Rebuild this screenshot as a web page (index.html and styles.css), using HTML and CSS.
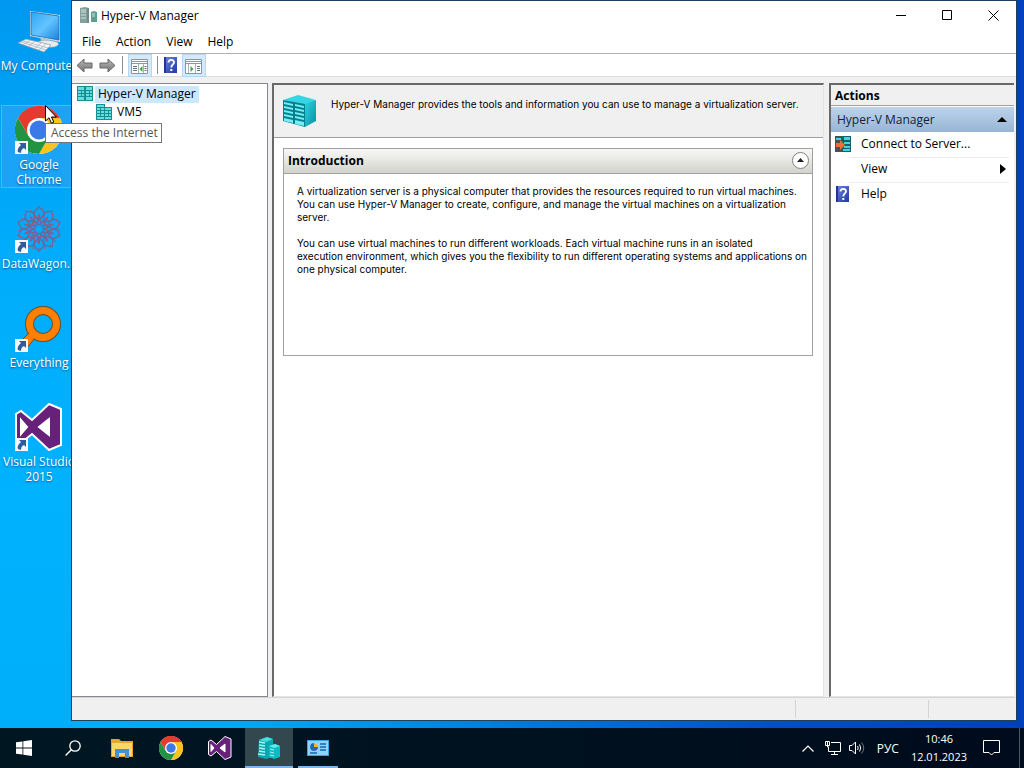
FILE: index.html
```html
<!DOCTYPE html>
<html lang="en">
<head>
    <meta charset="UTF-8">
    <meta name="viewport" content="width=device-width, initial-scale=1.0">
    <title>Hyper-V Manager</title>
    <link rel="stylesheet" href="styles.css">
</head>
<body>
    <!-- Shared icons -->
    <svg class="sprite" aria-hidden="true">
        <defs>
            <linearGradient id="cyan" x1="0" y1="0" x2="1" y2="1">
                <stop offset="0" stop-color="#2fd3e2"/>
                <stop offset="1" stop-color="#068fa3"/>
            </linearGradient>
            <linearGradient id="screen" x1="0" y1="0" x2="1" y2="1">
                <stop offset="0" stop-color="#2fa5f5"/>
                <stop offset="0.5" stop-color="#63c4ff"/>
                <stop offset="1" stop-color="#1683dc"/>
            </linearGradient>
            <linearGradient id="arrow" x1="0" y1="0" x2="0" y2="1">
                <stop offset="0" stop-color="#b4b4b4"/>
                <stop offset="1" stop-color="#777"/>
            </linearGradient>
            <linearGradient id="helpblue" x1="0" y1="0" x2="1" y2="1">
                <stop offset="0" stop-color="#7084dc"/>
                <stop offset="1" stop-color="#2038a8"/>
            </linearGradient>
        </defs>
        <symbol id="chrome" viewBox="0 0 48 48">
            <circle cx="24" cy="24" r="24" fill="#fff"/>
            <path d="M24 24 L3.2 12 A24 24 0 0 1 44.8 12 Z" fill="#e33b2e"/>
            <path d="M24 12 H44.8 A24 24 0 0 1 24 48 L34.4 30 Z" fill="#fcc31e"/>
            <path d="M13.6 30 L3.2 12 A24 24 0 0 0 24 48 L34.4 30 Z" fill="#229342"/>
            <path d="M24 12 H44.8 A24 24 0 0 0 3.2 12 L13.6 30 Z" fill="#e33b2e"/>
            <circle cx="24" cy="24" r="12" fill="#fff"/>
            <circle cx="24" cy="24" r="9.4" fill="#3b79e8"/>
        </symbol>
        <symbol id="vs" viewBox="0 0 48 48">
            <path fill-rule="evenodd" d="M34 1 L46 6 V42 L34 47 L17 31 L6 40 L1 37 V11 L6 8 L17 17 Z M34 16 L24 24 L34 32 Z M6 17 V31 L12 24 Z" fill="#68217a" stroke="#fff" stroke-width="2"/>
            <path d="M34 16 L24 24 L34 32 Z M6 17 V31 L12 24 Z" fill="#fff"/>
        </symbol>
        <symbol id="shortcut" viewBox="0 0 13 13">
            <path d="M0 0 H13 V13 H0 Z" fill="#f4f7fb"/>
            <path d="M4 2 H11 V9 L9 7 C7 8 6 9 6 12 L3 11 C2 8 4 6 6 4 Z" fill="#2f5c9f"/>
        </symbol>
        <symbol id="servers" viewBox="0 0 16 16">
            <path d="M0 0 H9 V3 H16 V16 H0 Z" fill="#178f92"/>
            <path d="M1 1 H8 V3 H1 Z M1 4 H4 V6 H1 Z M5 4 H8 V6 H5 Z M1 7 H4 V9 H1 Z M5 7 H8 V9 H5 Z M1 10 H4 V12 H1 Z M5 10 H8 V12 H5 Z M1 13 H8 V15 H1 Z M9 4 H15 V6 H9 Z M9 7 H12 V9 H9 Z M13 7 H15 V9 H13 Z M9 10 H12 V12 H9 Z M13 10 H15 V12 H13 Z M9 13 H15 V15 H9 Z" fill="#66dede"/>
        </symbol>
        <symbol id="help" viewBox="0 0 13 16">
            <path d="M0 0 H13 V16 H0 Z" fill="url(#helpblue)"/>
            <path d="M0 0 H2 V16 H0 Z" fill="#23358e"/>
            <path d="M4.5 5.5 C4.5 2 10 2 10 5.5 C10 7.5 7.3 7.5 7.3 10.5" fill="none" stroke="#fff" stroke-width="1.8"/>
            <path d="M6.3 12 H8.3 V14 H6.3 Z" fill="#fff"/>
        </symbol>
    </svg>

    <main class="desktop">
        <div class="shortcuts">
            <button class="shortcut">
                <svg class="shortcut-icon" viewBox="0 0 48 48">
                    <path d="M15 4 L45 8 V35 L15 29 Z" fill="#d5e4ee"/>
                    <path d="M16 5 L44 9 V33 L16 28 Z" fill="url(#screen)" stroke="#1769ad" stroke-width="0.8"/>
                    <path d="M25 30 L35 32 V36 L27 36 Z" fill="#b9c7d1"/>
                    <path d="M21 36 Q28 31 42 35 Q46 38 39 40 Q26 41 21 36 Z" fill="#e6ebee" stroke="#9aa9b3" stroke-width="0.6"/>
                    <path d="M11 32 L36 38 L29 45 L3 36 Z" fill="#f3f5f6" stroke="#8d9ba5" stroke-width="0.7"/>
                    <path d="M8 34 L33 41 M6 35 L31 43 M15 33 L8 38 M20 34 L13 40 M26 36 L19 42 M31 37 L24 43" stroke="#aab5bc" stroke-width="0.8"/>
                </svg>
                <span class="one-line">My Computer</span>
            </button>
            <button class="shortcut shortcut-hover">
                <svg class="shortcut-icon" viewBox="0 0 48 48">
                    <use href="#chrome" width="48" height="48"/>
                    <use href="#shortcut" y="35" width="13" height="13"/>
                </svg>
                <span>Google Chrome</span>
            </button>
            <button class="shortcut">
                <svg class="shortcut-icon" viewBox="0 0 48 48">
                    <g fill="none" stroke="#66699f" stroke-width="1.3">
                        <path id="petal" d="M24 16 L18 8 L24 2 L30 8 Z M24 20 L15 12 M24 20 L33 12"/>
                        <use href="#petal" transform="rotate(36 24 24)"/>
                        <use href="#petal" transform="rotate(72 24 24)"/>
                        <use href="#petal" transform="rotate(108 24 24)"/>
                        <use href="#petal" transform="rotate(144 24 24)"/>
                        <use href="#petal" transform="rotate(180 24 24)"/>
                        <use href="#petal" transform="rotate(216 24 24)"/>
                        <use href="#petal" transform="rotate(252 24 24)"/>
                        <use href="#petal" transform="rotate(288 24 24)"/>
                        <use href="#petal" transform="rotate(324 24 24)"/>
                        <circle cx="24" cy="24" r="8" stroke="#b5527a" stroke-dasharray="3 1"/>
                        <circle cx="24" cy="24" r="13" stroke="#c04e68" stroke-dasharray="2 2"/>
                        <circle cx="24" cy="24" r="20" stroke="#b5527a" stroke-dasharray="2 4"/>
                    </g>
                    <use href="#shortcut" y="35" width="13" height="13"/>
                </svg>
                <span class="one-line">DataWagon...</span>
            </button>
            <button class="shortcut">
                <svg class="shortcut-icon" viewBox="0 0 48 48">
                    <path d="M14 29 L20 34 L11 45 L4 39 Z" fill="#ff8000" stroke="#704c24"/>
                    <circle cx="28" cy="20" r="13.5" fill="none" stroke="#704c24" stroke-width="9"/>
                    <circle cx="28" cy="20" r="13.5" fill="none" stroke="#ff8000" stroke-width="7"/>
                    <path d="M15 29 L20 33 L11 43 L6 39 Z" fill="#ff8000"/>
                    <use href="#shortcut" y="35" width="13" height="13"/>
                </svg>
                <span>Everything</span>
            </button>
            <button class="shortcut">
                <svg class="shortcut-icon" viewBox="0 0 48 48">
                    <use href="#vs" width="48" height="48"/>
                    <use href="#shortcut" y="35" width="13" height="13"/>
                </svg>
                <span>Visual Studio 2015</span>
            </button>
        </div>

        <section class="window">
            <header class="titlebar">
                <svg width="17" height="17" viewBox="0 0 17 17">
                    <path d="M0 1 L5 0 L9 1 V16 H0 Z" fill="#84a09d"/>
                    <path d="M11 5 L14 4 L17 5 V15 H11 Z" fill="#5f9d8f"/>
                    <path d="M1 3 H6 M1 5 H6 M1 8 H6 M1 11 H6 M12 7 H15 M12 9 H15" stroke="#d0e2df"/>
                    <path d="M8 1 V16" stroke="#5d7876"/>
                </svg>
                <h1>Hyper-V Manager</h1>
                <button class="caption-btn" aria-label="Minimize">
                    <svg width="11" height="11" viewBox="0 0 11 11"><path d="M0 5.5 H10" stroke="#000"/></svg>
                </button>
                <button class="caption-btn" aria-label="Maximize">
                    <svg width="11" height="11" viewBox="0 0 11 11"><path d="M0.5 0.5 H9.5 V9.5 H0.5 Z" fill="none" stroke="#000"/></svg>
                </button>
                <button class="caption-btn" aria-label="Close">
                    <svg width="11" height="11" viewBox="0 0 11 11"><path d="M0.5 0.5 L10.5 10.5 M10.5 0.5 L0.5 10.5" stroke="#000"/></svg>
                </button>
            </header>

            <nav class="menubar">
                <button>File</button>
                <button>Action</button>
                <button>View</button>
                <button>Help</button>
            </nav>

            <div class="toolbar">
                <button aria-label="Back">
                    <svg width="17" height="15" viewBox="0 0 17 15"><path d="M1 7.5 L8 1 V5 H16 V10 H8 V14 Z" fill="url(#arrow)" stroke="#666"/></svg>
                </button>
                <button aria-label="Forward">
                    <svg width="17" height="15" viewBox="0 0 17 15"><path d="M16 7.5 L9 1 V5 H1 V10 H9 V14 Z" fill="url(#arrow)" stroke="#666"/></svg>
                </button>
                <span class="divider"></span>
                <button class="pressed" aria-label="Show or hide console tree">
                    <svg width="17" height="15" viewBox="0 0 17 15">
                        <path d="M0.5 0.5 H16.5 V14.5 H0.5 Z" fill="#fff" stroke="#8c949b"/>
                        <path d="M1 2.5 H16 M1 4.5 H16" stroke="#8b98a3"/>
                        <path d="M7.5 5 V14 M12.5 5 V14" stroke="#a9b2b9"/>
                        <path d="M2 7.5 H6 M2 9.5 H6 M2 11.5 H6 M13.5 7.5 H15.5 M13.5 9.5 H15.5 M13.5 11.5 H15.5" stroke="#5c6f7c"/>
                        <path d="M11.5 7 V13 L8.5 10 Z" fill="#3ca53c"/>
                    </svg>
                </button>
                <span class="divider"></span>
                <button aria-label="Help">
                    <svg width="13" height="16"><use href="#help" width="13" height="16"/></svg>
                </button>
                <button class="pressed" aria-label="Show or hide action pane">
                    <svg width="17" height="15" viewBox="0 0 17 15">
                        <path d="M0.5 0.5 H16.5 V14.5 H0.5 Z" fill="#fff" stroke="#8c949b"/>
                        <path d="M1 2.5 H16 M1 4.5 H16" stroke="#8b98a3"/>
                        <path d="M3.5 5 V14 M10.5 5 V14" stroke="#a9b2b9"/>
                        <path d="M12 7.5 H15 M12 9.5 H15 M12 11.5 H15" stroke="#5c6f7c"/>
                        <path d="M5.5 7 V13 L8.5 10 Z" fill="#3ca53c"/>
                    </svg>
                </button>
            </div>

            <div class="panes">
                <ul class="tree">
                    <li>
                        <button class="node">
                            <svg width="16" height="16" viewBox="0 0 16 16">
                                <path d="M0 0 H16 V15 H0 Z" fill="#178f92"/>
                                <path d="M1 1 H7 V4 H1 Z M9 1 H15 V4 H9 Z M1 5 H4 V7 H1 Z M5 5 H7 V7 H5 Z M9 5 H12 V7 H9 Z M13 5 H15 V7 H13 Z M1 8 H4 V10 H1 Z M5 8 H7 V10 H5 Z M9 8 H12 V10 H9 Z M13 8 H15 V10 H13 Z M1 11 H7 V14 H1 Z M9 11 H15 V14 H9 Z" fill="#66dede"/>
                            </svg>
                            <span class="selected">Hyper-V Manager</span>
                        </button>
                        <ul>
                            <li>
                                <button class="node">
                                    <svg width="16" height="16"><use href="#servers" width="16" height="16"/></svg>
                                    <span>VM5</span>
                                </button>
                            </li>
                        </ul>
                    </li>
                </ul>

                <div class="content">
                    <div class="summary">
                        <svg width="33" height="34" viewBox="0 0 33 34">
                            <path d="M0 6 L15 1 L33 6 L22 11 Z" fill="#35d6e4"/>
                            <path d="M22 10 L33 6 V27 L22 33 Z" fill="url(#cyan)"/>
                            <path d="M0 6 L22 10 V33 L0 27 Z" fill="#087f8d"/>
                            <path d="M1 8 L10 10 V12 L1 10 Z M12 10 L21 12 V14 L12 12 Z M1 12 L10 14 V16 L1 14 Z M12 14 L21 16 V18 L12 16 Z M1 16 L10 18 V20 L1 18 Z M12 18 L21 20 V22 L12 20 Z M1 20 L10 22 V24 L1 22 Z M12 22 L21 24 V26 L12 24 Z M1 24 L10 26 V29 L1 27 Z M12 26 L21 28 V32 L12 30 Z" fill="#74edf4"/>
                        </svg>
                        <p>Hyper-V Manager provides the tools and information you can use to manage a virtualization server.</p>
                    </div>
                    <section class="card">
                        <header class="card-header">
                            <h2>Introduction</h2>
                            <button class="collapse" aria-label="Collapse">
                                <svg width="7" height="4" viewBox="0 0 7 4"><path d="M0 4 L3.5 0 L7 4 Z" fill="#222"/></svg>
                            </button>
                        </header>
                        <div class="card-body">
                            <p>A virtualization server is a physical computer that provides the resources required to run virtual machines. You can use Hyper-V Manager to create, configure, and manage the virtual machines on a virtualization server.</p>
                            <p>You can use virtual machines to run different workloads. Each virtual machine runs in an isolated<br>execution environment, which gives you the flexibility to run different operating systems and applications on one physical computer.</p>
                        </div>
                    </section>
                </div>

                <aside class="actions">
                    <h2>Actions</h2>
                    <button class="group">
                        <span>Hyper-V Manager</span>
                        <svg width="10" height="5" viewBox="0 0 10 5"><path d="M0 5 L5 0 L10 5 Z" fill="#000"/></svg>
                    </button>
                    <button class="action">
                        <svg width="16" height="16" viewBox="0 0 16 16">
                            <path d="M0 0 H16 V16 H0 Z" fill="#15616a"/>
                            <path d="M0 0 H7 V16 H0 Z" fill="#4c4f55"/>
                            <path d="M9 1 H15 V4 H9 Z M9 6 H15 V8 H9 Z M9 10 H15 V12 H9 Z M8 13 H15 V15 H8 Z M1 2 H6 V4 H1 Z" fill="#45d4da"/>
                            <path d="M1 7 H5 V4 L10 9 L5 14 V11 H1 Z" fill="#f07030"/>
                        </svg>
                        <span>Connect to Server...</span>
                    </button>
                    <button class="action">
                        <i class="no-icon"></i>
                        <span>View</span>
                        <svg class="submenu" width="6" height="10" viewBox="0 0 6 10"><path d="M0 0 L6 5 L0 10 Z" fill="#000"/></svg>
                    </button>
                    <button class="action">
                        <svg width="16" height="16"><use href="#help" x="1" width="13" height="16"/></svg>
                        <span>Help</span>
                    </button>
                </aside>
            </div>

            <footer class="statusbar">
                <span></span>
                <span></span>
                <span></span>
            </footer>
        </section>

        <div class="tooltip" role="tooltip">Access the Internet</div>
        <svg class="cursor" width="12" height="19" viewBox="0 0 12 19">
            <path d="M0.5 0.5 V16 L4 12.8 L6.4 18.2 L8.8 17.2 L6.5 12 H11.3 Z" fill="#fff" stroke="#000"/>
        </svg>
    </main>

    <footer class="taskbar">
        <button class="task" aria-label="Start">
            <svg width="16" height="16" viewBox="0 0 16 16"><path d="M0 2.3 L6.5 1.4 V7.6 H0 Z M7.3 1.3 L16 0 V7.6 H7.3 Z M0 8.4 H6.5 V14.6 L0 13.7 Z M7.3 8.4 H16 V16 L7.3 14.7 Z" fill="#fff"/></svg>
        </button>
        <button class="task" aria-label="Search">
            <svg width="16" height="16" viewBox="0 0 16 16"><circle cx="10" cy="6" r="5.2" fill="none" stroke="#fff" stroke-width="1.3"/><path d="M6.3 9.7 L0.6 15.4" stroke="#fff" stroke-width="1.4"/></svg>
        </button>
        <button class="task" aria-label="File Explorer">
            <svg width="22" height="20" viewBox="0 0 22 20">
                <path d="M0 1 H8 L10 3 H22 V19 H0 Z" fill="#e5a72b"/>
                <path d="M1 5 H21 V18 H1 Z" fill="#fcd66b"/>
                <path d="M4 11 H18 V20 H14 V15 H8 V20 H4 Z" fill="#3f93cf"/>
            </svg>
        </button>
        <button class="task" aria-label="Google Chrome">
            <svg width="24" height="24"><use href="#chrome" width="24" height="24"/></svg>
        </button>
        <button class="task" aria-label="Visual Studio">
            <svg width="24" height="24"><use href="#vs" width="24" height="24"/></svg>
        </button>
        <button class="task task-active" aria-label="Hyper-V Manager">
            <svg width="24" height="24" viewBox="0 0 24 24">
                <path d="M2 4 L10 1 L16 3 V21 L9 23 L1 21 Z" fill="#0fa5ad"/>
                <path d="M2 4 L10 1 L16 3 L9 6 Z" fill="#43dfe3"/>
                <path d="M2 6 L8 7 M2 9 L8 10 M2 12 L8 13 M2 15 L8 16 M1 18 L8 19" stroke="#a4f6f6" stroke-width="1.4"/>
                <path d="M12 10 L18 8 L23 10 V21 L17 23 L12 21 Z" fill="#0cbcc4"/>
                <path d="M12 10 L18 8 L23 10 L17 12 Z" fill="#5cecee"/>
                <path d="M13 13 L17 14 M13 16 L17 17 M13 19 L17 20" stroke="#a4f6f6"/>
            </svg>
        </button>
        <button class="task task-open" aria-label="Control Panel">
            <svg width="22" height="16" viewBox="0 0 22 16">
                <path d="M0 0 H22 V16 H0 Z" fill="#3ba4e4"/>
                <path d="M1 1 H21 V15 H1 Z" fill="#8fd3f8"/>
                <circle cx="7" cy="7" r="4" fill="#fff"/>
                <path d="M7 7 V3 A4 4 0 0 1 11 7 Z" fill="#f0b429"/>
                <path d="M7 7 H11 A4 4 0 1 1 7 3 Z" fill="#2467b3"/>
                <path d="M13 4 H19 M13 7 H19 M13 10 H19 M3 13 H10" stroke="#1668ad" stroke-width="1.3"/>
            </svg>
        </button>

        <div class="tray">
            <button class="chevron" aria-label="Show hidden icons">
                <svg width="12" height="7" viewBox="0 0 12 7"><path d="M0.5 6.5 L6 1 L11.5 6.5" fill="none" stroke="#fff" stroke-width="1.2"/></svg>
            </button>
            <button aria-label="Network">
                <svg width="16" height="14" viewBox="0 0 16 14"><path d="M6 1.5 H15.5 V10.5 H3.5 V6 M9.5 10.5 V13 M6 13.5 H13 M0.5 0.5 H4.5 V4.5 H0.5 Z M2.5 0.5 V6 H4" fill="none" stroke="#fff"/></svg>
            </button>
            <button aria-label="Volume">
                <svg width="16" height="14" viewBox="0 0 16 14"><path d="M0.5 4.5 H3 L6.5 1 V13 L3 9.5 H0.5 Z M8.5 5 Q10 7 8.5 9 M10.5 3.5 Q13 7 10.5 10.5" fill="none" stroke="#fff"/><path d="M12.5 1.5 Q17 7 12.5 12.5" fill="none" stroke="#777"/></svg>
            </button>
            <button class="language" lang="ru">РУС</button>
            <button class="clock">
                <time>10:46</time>
                <time>12.01.2023</time>
            </button>
            <button class="notifications" aria-label="Notifications">
                <svg width="17" height="16" viewBox="0 0 17 16"><path d="M0.5 0.5 H16.5 V12.5 H11 L8.5 15 L6 12.5 H0.5 Z" fill="none" stroke="#fff"/></svg>
            </button>
            <button class="show-desktop" aria-label="Show desktop"></button>
        </div>
    </footer>
</body>
</html>
```
FILE: styles.css
```css
* {
    box-sizing: border-box;
}
body {
    display: flex;
    flex-direction: column;
    height: 100vh;
    margin: 0;
    overflow: hidden;
    font-family: "Open Sans", "Noto Sans", sans-serif;
    font-size: 12px;
    line-height: 15px;
    color: #000;
}
h1, h2, p, ul {
    margin: 0;
    padding: 0;
    font-size: 12px;
}
h1 {
    font-weight: normal;
}
ul {
    list-style: none;
}
button {
    padding: 0;
    border: none;
    background: none;
    font: inherit;
    color: inherit;
}
svg {
    display: block;
    flex-shrink: 0;
}
.sprite {
    position: absolute;
    width: 0;
    height: 0;
}

/* Desktop */
.desktop {
    position: relative;
    flex: 1;
    min-height: 0;
    background: linear-gradient(90deg, #00b0fa 0%, #00a6f0 25%, #0050c4 75%, #0040b8 100%);
}
.shortcuts {
    display: grid;
    grid-auto-rows: 99px;
    justify-items: center;
    align-items: start;
    width: 78px;
    height: 100%;
    padding-top: 6px;
    background: linear-gradient(#0098f0, #00acfb 250px, #00b2ff 500px, #00aef8);
}
.shortcut {
    display: flex;
    flex-direction: column;
    align-items: center;
    gap: 3px;
    width: 76px;
    border: 1px solid transparent;
    color: #fff;
    text-shadow: 0 1px 2px #00508c;
}
.shortcut-hover {
    border-color: #48b8f8;
    background: #1ba4f5;
}
.shortcut-icon {
    width: 48px;
    height: 48px;
}
.one-line {
    white-space: nowrap;
}

/* Window */
.window {
    position: absolute;
    top: 0;
    right: 7px;
    bottom: 7px;
    left: 71px;
    display: flex;
    flex-direction: column;
    border: 1px solid #1d3f60;
    background: #f0f0f0;
}
.titlebar {
    display: flex;
    align-items: center;
    height: 29px;
    padding-left: 8px;
    background: #fff;
}
.titlebar h1 {
    flex: 1;
    margin-left: 4px;
}
.caption-btn {
    display: flex;
    align-items: center;
    justify-content: center;
    width: 46px;
    height: 29px;
}
.menubar {
    display: flex;
    gap: 15px;
    height: 23px;
    padding: 0 0 1px 10px;
    background: #fff;
}
.toolbar {
    display: flex;
    align-items: center;
    gap: 6px;
    height: 24px;
    padding-left: 4px;
    border-top: 1px solid #b0b0b0;
    border-bottom: 1px solid #dcdcdc;
    background: #fff;
}
.toolbar .divider {
    width: 1px;
    height: 18px;
    background: #8c8c8c;
}
.toolbar .pressed {
    margin: 0 -1px;
    padding: 4px 3px 2px 2px;
    border: 1px solid #b4d8f4;
    background: #d4eafb;
}
.panes {
    display: grid;
    grid-template-columns: 196px minmax(0, 1fr) 185px;
    flex: 1;
    min-height: 0;
    padding: 6px 2px 0 0;
}

/* Console tree */
.tree {
    padding: 1px 5px;
    border: 1px solid #828790;
    border-left: none;
    background: #fff;
}
.tree ul {
    padding-left: 19px;
}
.node {
    display: flex;
    align-items: center;
    gap: 2px;
    height: 18px;
}
.node span {
    padding: 0 3px 2px;
}
.node .selected {
    background: #cce8ff;
}

/* Middle pane */
.content {
    margin: 0 5px 0 4px;
    border-top: 2px solid #696969;
    border-left: 2px solid #696969;
    border-right: 1px solid #e3e3e3;
    border-bottom: 1px solid #e3e3e3;
    background: #fff;
    font-family: Inter, "Liberation Sans", Arial, sans-serif;
    line-height: 13px;
}
.content p {
    font-size: 10px;
}
.summary {
    display: flex;
    gap: 15px;
    height: 53px;
    padding: 9px;
    border-bottom: 1px solid #a0a0a0;
    background: #f0f0f0;
}
.summary p {
    padding-top: 4px;
}
.card {
    min-height: 208px;
    margin: 10px 10px 0 9px;
    border: 1px solid #a0a0a0;
}
.card-header {
    display: flex;
    align-items: center;
    justify-content: space-between;
    height: 25px;
    padding: 0 3px 2px 4px;
    border-bottom: 1px solid #a0a0a0;
    background: linear-gradient(#f8f8f6, #d3d3cd);
    font-family: "Open Sans", "Noto Sans", sans-serif;
}
.collapse {
    display: flex;
    align-items: center;
    justify-content: center;
    width: 17px;
    height: 17px;
    border: 1px solid #808080;
    border-radius: 50%;
    background: #fff;
}
.card-body {
    padding: 11px 2px 11px 13px;
}
.card-body p + p {
    margin-top: 13px;
}

/* Actions pane */
.actions {
    display: flex;
    flex-direction: column;
    border-top: 2px solid #696969;
    border-left: 2px solid #696969;
    border-bottom: 1px solid #e3e3e3;
    background: #fff;
}
.actions h2 {
    height: 21px;
    padding: 3px 4px;
    border-bottom: 1px solid #a0a0a0;
    background: #f0f0f0;
}
.group {
    display: flex;
    align-items: center;
    justify-content: space-between;
    height: 25px;
    margin-top: 1px;
    padding: 0 7px 0 6px;
    background: linear-gradient(#bdd3ea, #98b5d5);
    color: #10233c;
}
.action {
    display: flex;
    align-items: center;
    gap: 10px;
    height: 25px;
    padding: 0 8px 2px 4px;
    text-align: left;
}
.action + .action {
    background: linear-gradient(#ececec, #ececec) 18px 0 / 160px 1px no-repeat;
}
.no-icon {
    width: 16px;
}
.submenu {
    margin-left: auto;
}

.statusbar {
    display: grid;
    grid-template-columns: 1fr 133px 88px;
    height: 23px;
    border-top: 1px solid #d4d4d4;
}
.statusbar span + span {
    margin: 2px 0;
    border-left: 1px solid #d4d4d4;
}

/* Hover hint over the desktop */
.tooltip {
    position: absolute;
    top: 123px;
    left: 45px;
    padding: 1px 3px 2px 5px;
    border: 1px solid #767676;
    background: #fff;
    color: #575757;
}
.cursor {
    position: absolute;
    top: 105px;
    left: 45px;
}

/* Taskbar */
.taskbar {
    display: flex;
    gap: 1px;
    height: 40px;
    background: linear-gradient(90deg, #001722, #000b1c);
    color: #fff;
}
.task {
    display: flex;
    align-items: center;
    justify-content: center;
    width: 48px;
}
.task-active {
    background: #33474f;
    box-shadow: inset 0 -2px #76b9ed;
}
.task-open {
    background: linear-gradient(#76b9ed, #76b9ed) 4px 100% / 40px 2px no-repeat;
}
.tray {
    display: flex;
    align-items: center;
    gap: 8px;
    margin-left: auto;
}
.chevron {
    margin-right: 3px;
}
.language {
    margin-left: 4px;
}
.clock {
    display: flex;
    flex-direction: column;
    align-items: center;
    gap: 3px;
    margin: 0 8px 0 4px;
    padding-bottom: 2px;
    font-size: 11px;
}
.notifications {
    margin-right: 11px;
}
.show-desktop {
    width: 5px;
    height: 40px;
    border-left: 1px solid #4c5866;
}
```
